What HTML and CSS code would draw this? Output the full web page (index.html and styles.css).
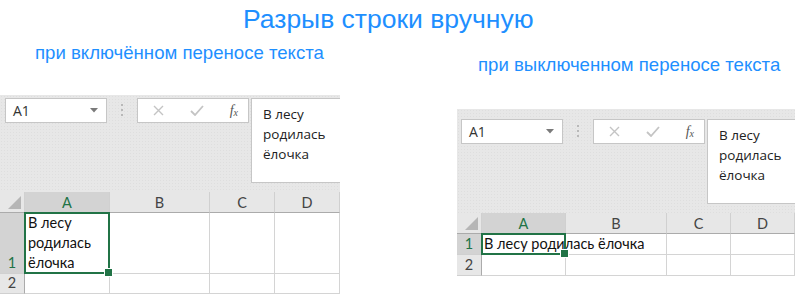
FILE: index.html
```html
<!DOCTYPE html>
<html lang="ru">
<head>
    <meta charset="UTF-8">
    <title>Разрыв строки вручную</title>
    <link rel="stylesheet" href="styles.css">
</head>
<body>
    <h1 class="title">Разрыв строки вручную</h1>
    <div class="demos">
        <!-- wrap on -->
        <div class="demo demo-wrap">
            <p class="caption">при включённом переносе текста</p>
            <div class="panel">
                <div class="fbar">
                    <div class="namebox">
                        <span>A1</span>
                        <svg class="caret" width="8" height="5" viewBox="0 0 8 5"><path d="M0 0h8L4 4.5z" fill="#7a7a7a"/></svg>
                    </div>
                    <div class="grip"><i></i><i></i><i></i></div>
                    <div class="fbtns">
                        <svg width="11" height="11" viewBox="0 0 11 11"><path d="M1 1l9 9M10 1l-9 9" stroke="#c4c4c4" stroke-width="1.4"/></svg>
                        <svg width="14" height="11" viewBox="0 0 14 11"><path d="M1 6l4 4 8-9" stroke="#c4c4c4" stroke-width="1.8" fill="none"/></svg>
                        <span class="fx">f<sub>x</sub></span>
                    </div>
                    <div class="fbox">В лесу<br>родилась<br>ёлочка</div>
                </div>
                <div class="sheet">
                    <div class="corner"></div>
                    <div class="colhead active">A</div>
                    <div class="colhead">B</div>
                    <div class="colhead">C</div>
                    <div class="colhead">D</div>

                    <div class="rowhead active">1</div>
                    <div class="cell selected">В лесу<br>родилась<br>ёлочка</div>
                    <div class="cell"></div>
                    <div class="cell"></div>
                    <div class="cell"></div>

                    <div class="rowhead">2</div>
                    <div class="cell"></div>
                    <div class="cell"></div>
                    <div class="cell"></div>
                    <div class="cell"></div>
                </div>
            </div>
        </div>

        <!-- wrap off -->
        <div class="demo demo-nowrap">
            <p class="caption">при выключенном переносе текста</p>
            <div class="panel">
                <div class="fbar">
                    <div class="namebox">
                        <span>A1</span>
                        <svg class="caret" width="8" height="5" viewBox="0 0 8 5"><path d="M0 0h8L4 4.5z" fill="#7a7a7a"/></svg>
                    </div>
                    <div class="grip"><i></i><i></i><i></i></div>
                    <div class="fbtns">
                        <svg width="11" height="11" viewBox="0 0 11 11"><path d="M1 1l9 9M10 1l-9 9" stroke="#c4c4c4" stroke-width="1.4"/></svg>
                        <svg width="14" height="11" viewBox="0 0 14 11"><path d="M1 6l4 4 8-9" stroke="#c4c4c4" stroke-width="1.8" fill="none"/></svg>
                        <span class="fx">f<sub>x</sub></span>
                    </div>
                    <div class="fbox">В лесу<br>родилась<br>ёлочка</div>
                </div>
                <div class="sheet">
                    <div class="corner"></div>
                    <div class="colhead active">A</div>
                    <div class="colhead">B</div>
                    <div class="colhead">C</div>
                    <div class="colhead">D</div>

                    <div class="rowhead active">1</div>
                    <div class="cell selected overflow">В лесу родилась ёлочка</div>
                    <div class="cell"></div>
                    <div class="cell"></div>
                    <div class="cell"></div>

                    <div class="rowhead">2</div>
                    <div class="cell"></div>
                    <div class="cell"></div>
                    <div class="cell"></div>
                    <div class="cell"></div>
                </div>
            </div>
        </div>
    </div>
</body>
</html>
```

FILE: styles.css
```css
* {
    margin: 0;
    padding: 0;
    box-sizing: border-box;
}

body {
    width: 810px;
    height: 294px;
    overflow: hidden;
    background: #fff;
    font-family: 'Liberation Sans', Arial, sans-serif;
}

.title {
    height: 36px;
    padding: 4px 0 0 243px;
    font-size: 26.5px;
    line-height: 31px;
    font-weight: normal;
    color: #1e8fff;
}

.demos {
    display: grid;
    grid-template-columns: 340px 338px;
    column-gap: 117px;
}

.caption {
    font-size: 18.6px;
    line-height: 20px;
    color: #1e8fff;
    white-space: nowrap;
}

.demo-wrap .caption {
    margin-top: 7px;
    padding-left: 35px;
}

.demo-wrap .panel {
    margin-top: 32px;
    padding: 3px 0 0 5px;
}

.demo-nowrap .caption {
    margin-top: 19px;
    padding-left: 21px;
}

.demo-nowrap .panel {
    margin-top: 34px;
    padding: 10px 0 0 4px;
}

/* Excel window */
.panel {
    overflow: hidden;
    background-color: #e7e7e7;
    background-image: radial-gradient(#dedede 0.6px, transparent 0.8px);
    background-size: 3px 3px;
}

.fbar {
    display: flex;
    align-items: flex-start;
    height: 85px;
}

.namebox {
    display: flex;
    flex-shrink: 0;
    align-items: center;
    justify-content: space-between;
    width: 102px;
    height: 25px;
    padding: 0 8px 0 7px;
    background: #fff;
    border: 1px solid #c6c6c6;
    font-family: 'Open Sans', 'Noto Sans', sans-serif;
    font-size: 14px;
    color: #333;
}

.grip {
    display: flex;
    flex-shrink: 0;
    flex-direction: column;
    align-items: center;
    gap: 3px;
    width: 30px;
    padding-top: 6px;
}

.grip i {
    width: 2px;
    height: 2px;
    background: #b8b8b8;
}

.fbtns {
    display: flex;
    flex-shrink: 0;
    align-items: center;
    justify-content: space-between;
    width: 112px;
    height: 25px;
    padding: 0 10px 0 15px;
    background: #fff;
    border: 1px solid #c6c6c6;
}

.fx {
    font-family: 'Liberation Serif', serif;
    font-style: italic;
    font-size: 14px;
    color: #555;
    line-height: 1;
}

.fx sub {
    font-size: 10px;
    vertical-align: -1px;
}

.fbox {
    flex: 0 0 120px;
    height: 85px;
    margin-left: 2px;
    padding: 5px 0 0 11px;
    background: #fff;
    border: 1px solid #c6c6c6;
    font-family: 'Open Sans', 'Noto Sans', sans-serif;
    font-size: 13.5px;
    line-height: 20px;
    color: #222;
    white-space: nowrap;
}

/* grid */
.sheet {
    display: grid;
    margin-top: 9px;
    background: #fff;
    font-family: Lato, 'Liberation Sans', sans-serif;
    font-size: 14.5px;
}

.demo-wrap .sheet {
    margin-left: -5px;
    grid-template-columns: 25px 85px 100px 65px 65px;
    grid-template-rows: 21px 61px 20px;
}

.demo-nowrap .sheet {
    margin-left: -4px;
    grid-template-columns: 25px 84px 101px 64px 64px;
    grid-template-rows: 21px 21px 21px;
}

.corner {
    position: relative;
    background: #e7e7e7;
    border-right: 1px solid #d0d0d0;
    border-bottom: 1px solid #ababab;
}

.corner::after {
    content: '';
    position: absolute;
    right: 3px;
    bottom: 3px;
    border-style: solid;
    border-width: 0 0 13px 13px;
    border-color: transparent transparent #b6b6b6 transparent;
}

.colhead {
    display: flex;
    align-items: center;
    justify-content: center;
    background: #e7e7e7;
    border-right: 1px solid #d0d0d0;
    border-bottom: 1px solid #ababab;
    color: #444;
}

.colhead.active {
    background: #d3d3d3;
    color: #217346;
    border-bottom: 1px solid #9c9c9c;
}

.rowhead {
    display: flex;
    align-items: flex-end;
    justify-content: center;
    padding-bottom: 1px;
    background: #e7e7e7;
    border-right: 1px solid #ababab;
    border-bottom: 1px solid #d0d0d0;
    color: #444;
    line-height: 19px;
}

.rowhead.active {
    background: #d3d3d3;
    color: #217346;
}

.cell {
    position: relative;
    border-right: 1px solid #d4d4d4;
    border-bottom: 1px solid #d4d4d4;
    line-height: 20px;
    color: #111;
    white-space: nowrap;
}

.cell.selected {
    display: flex;
    align-items: flex-end;
    padding: 0 0 0 3px;
}

.cell.overflow {
    z-index: 1;
    padding-left: 2px;
}

.cell.selected::before {
    content: '';
    position: absolute;
    left: -1px;
    top: -1px;
    right: -1px;
    bottom: -1px;
    border: 2px solid #217346;
    z-index: 2;
}

.cell.selected::after {
    content: '';
    position: absolute;
    right: -4px;
    bottom: -4px;
    width: 7px;
    height: 7px;
    background: #217346;
    border: 1px solid #fff;
    z-index: 3;
}
```
